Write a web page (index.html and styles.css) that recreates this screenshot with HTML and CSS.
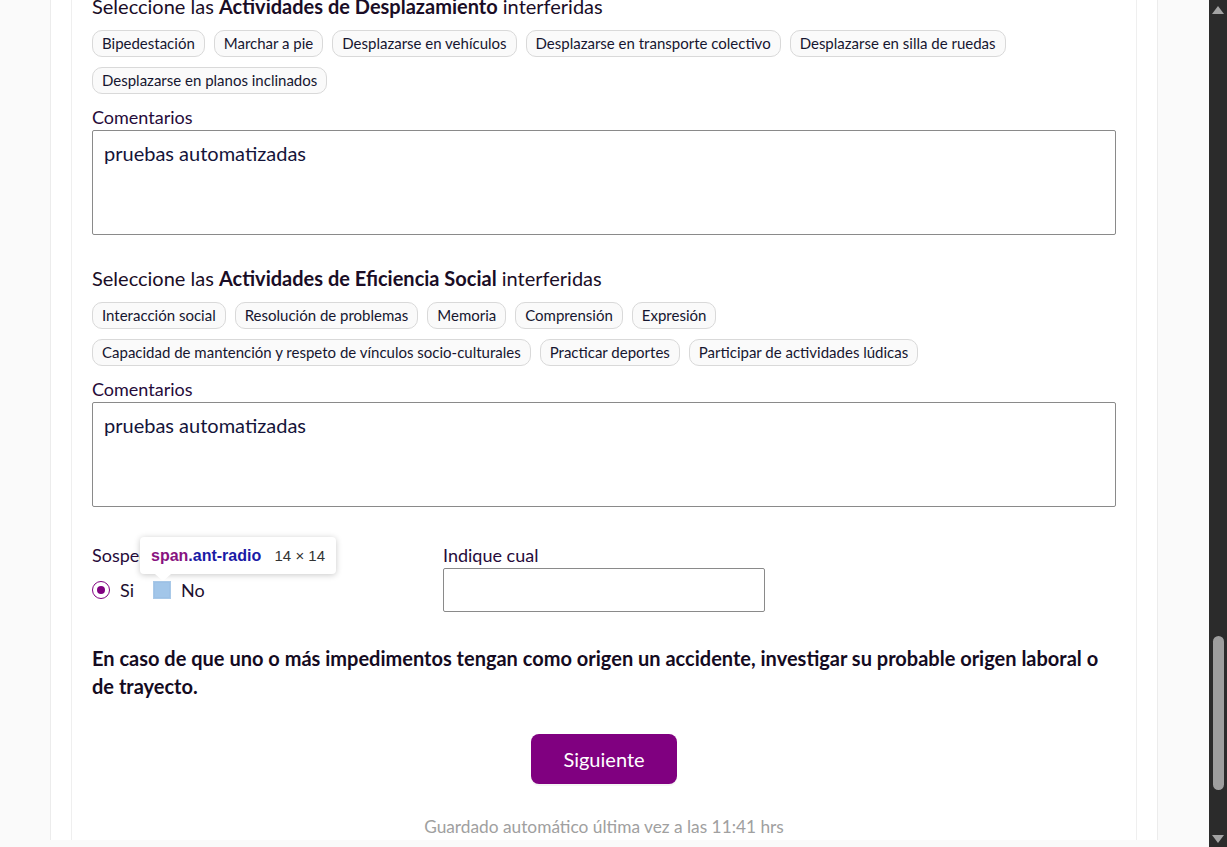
FILE: index.html
```html
<!DOCTYPE html>
<html lang="es">
<head>
<meta charset="utf-8">
<title>Formulario</title>
<link rel="stylesheet" href="styles.css">
</head>
<body>
<div class="screen">
  <main class="viewport">
    <div class="frame">
      <div class="card">
        <section class="section first">
          <h3 class="heading">Seleccione las <b>Actividades de Desplazamiento</b> interferidas</h3>
          <div class="chips">
            <span class="chip">Bipedestación</span>
            <span class="chip">Marchar a pie</span>
            <span class="chip">Desplazarse en vehículos</span>
            <span class="chip">Desplazarse en transporte colectivo</span>
            <span class="chip">Desplazarse en silla de ruedas</span>
            <span class="chip">Desplazarse en planos inclinados</span>
          </div>
          <label class="label">Comentarios</label>
          <div class="textarea">pruebas automatizadas</div>
        </section>

        <section class="section">
          <h3 class="heading">Seleccione las <b>Actividades de Eficiencia Social</b> interferidas</h3>
          <div class="chips">
            <span class="chip">Interacción social</span>
            <span class="chip">Resolución de problemas</span>
            <span class="chip">Memoria</span>
            <span class="chip">Comprensión</span>
            <span class="chip">Expresión</span>
            <span class="chip">Capacidad de mantención y respeto de vínculos socio-culturales</span>
            <span class="chip">Practicar deportes</span>
            <span class="chip">Participar de actividades lúdicas</span>
          </div>
          <label class="label">Comentarios</label>
          <div class="textarea">pruebas automatizadas</div>
        </section>

        <div class="pair">
          <div class="field">
            <label class="label">Sospecha de otra causa</label>
            <div class="radios">
              <span class="radio-item"><span class="radio checked"></span><span class="radio-text">Si</span></span>
              <span class="radio-item"><span class="radio hl"></span><span class="radio-text">No</span></span>
              <div class="tip">
                <span class="tip-sel"><span class="tip-tag">span</span>.ant-radio</span>
                <span class="tip-size">14 × 14</span>
              </div>
            </div>
          </div>
          <div class="field">
            <label class="label">Indique cual</label>
            <div class="input"></div>
          </div>
        </div>

        <p class="notice">En caso de que uno o más impedimentos tengan como origen un accidente, investigar su probable origen laboral o de trayecto.</p>

        <div class="actions">
          <button class="btn">Siguiente</button>
        </div>
        <p class="saved">Guardado automático última vez a las 11:41 hrs</p>
      </div>
    </div>
  </main>
  <aside class="scrollbar">
    <span class="arrow up"></span>
    <div class="track"><div class="thumb"></div></div>
    <span class="arrow down"></span>
  </aside>
</div>
</body>
</html>
```

FILE: styles.css
```css
* { box-sizing: border-box; }
html, body { margin: 0; padding: 0; height: 100%; overflow: hidden; }
body {
  font-family: "Lato", "Open Sans", "Liberation Sans", sans-serif;
  color: #1d0f2e;
  background: #fafafa;
}
.screen {
  display: flex;
  height: 847px;
}
.viewport {
  flex: 1;
  background: #fafafa;
  overflow: hidden;
}
.frame {
  width: 1108px;
  margin: 0 auto 0 50px;
  height: 100%;
  background: #fff;
  border-left: 1px solid #ececec;
  border-right: 1px solid #ececec;
  padding: 0 20px;
}
.card {
  height: 100%;
  border-left: 1px solid #efefef;
  border-right: 1px solid #efefef;
  padding: 0 20px;
}
.section.first { margin-top: -7px; }
.section { margin-bottom: 30px; }
.heading {
  margin: 0 0 10px;
  font-size: 20px;
  font-weight: 400;
  line-height: 27px;
  color: #1a0d26;
}
.heading b { font-weight: 700; }
.chips {
  display: flex;
  flex-wrap: wrap;
  gap: 10px 9px;
}
.chip {
  display: inline-block;
  height: 27px;
  line-height: 25px;
  padding: 0 9px;
  font-size: 15px;
  color: #161630;
  background: #fafafa;
  border: 1px solid #d9d9d9;
  border-radius: 10px;
  white-space: nowrap;
}
.label {
  display: block;
  margin-top: 11px;
  font-size: 18px;
  line-height: 24px;
  margin-bottom: 1px;
  color: #260b3a;
}
.textarea {
  height: 105px;
  border: 1px solid #8a8a8a;
  border-radius: 2px;
  padding: 8px 11px;
  font-size: 20px;
  line-height: 28px;
  color: #14143a;
}
.pair {
  display: grid;
  grid-template-columns: 351px 322px;
  margin-top: 36px;
}
.field .label { margin-top: 0; }
.radios {
  position: relative;
  display: flex;
  align-items: center;
  height: 24px;
  margin-top: 11px;
}
.radio-item {
  display: inline-flex;
  align-items: center;
  margin-right: 19px;
}
.radio {
  display: inline-block;
  width: 18px;
  height: 18px;
  border-radius: 50%;
  border: 1.5px solid #800080;
  position: relative;
}
.radio.checked::after {
  content: "";
  position: absolute;
  left: 3.5px;
  top: 3.5px;
  width: 8px;
  height: 8px;
  border-radius: 50%;
  background: #800080;
}
.radio.hl {
  border: 1px solid #a9c9e8;
  background: #a2c6e9;
  border-radius: 0;
  box-shadow: inset 0 0 0 1px #9dc1e6;
}
.radio-text {
  margin-left: 10px;
  font-size: 18px;
  color: #1d0f2e;
}
.tip {
  position: absolute;
  left: 48px;
  top: -41px;
  width: 196px;
  height: 37px;
  background: #fff;
  border-radius: 4px;
  box-shadow: 0 1px 6px rgba(0,0,0,0.22);
  display: flex;
  align-items: center;
  padding: 0 11px;
  font-family: "Liberation Sans", "Roboto", sans-serif;
  font-size: 16px;
}
.tip::after {
  content: "";
  position: absolute;
  left: 15px;
  bottom: -7px;
  width: 0;
  height: 0;
  border-left: 8px solid transparent;
  border-right: 8px solid transparent;
  border-top: 7px solid #fff;
}
.tip-sel { font-weight: 700; color: #1a1aa6; }
.tip-tag { color: #881280; }
.tip-size { margin-left: auto; color: #333; font-size: 15px; }
.input {
  height: 44px;
  border: 1px solid #8a8a8a;
  border-radius: 2px;
}
.notice {
  margin: 32px 0 0;
  font-size: 20px;
  font-weight: 700;
  line-height: 28px;
  color: #150b1f;
}
.actions {
  display: flex;
  justify-content: center;
  margin-top: 34px;
}
.btn {
  width: 146px;
  height: 50px;
  border: none;
  border-radius: 8px;
  background: #800080;
  color: #fff;
  font-family: inherit;
  font-size: 20px;
  box-shadow: 0 2px 0 rgba(0,0,0,0.04);
}
.saved {
  margin: 31px 0 0;
  text-align: center;
  font-size: 17.3px;
  line-height: 24px;
  color: #a0a0a0;
}
.scrollbar {
  width: 18px;
  background: #2b2b2b;
  display: flex;
  flex-direction: column;
  align-items: center;
}
.arrow {
  width: 0;
  height: 0;
  border-left: 6px solid transparent;
  border-right: 6px solid transparent;
}
.arrow.up { margin-top: 6px; border-bottom: 8px solid #a3a3a3; }
.arrow.down { margin-bottom: 4px; border-top: 8px solid #a3a3a3; }
.track { flex: 1; width: 100%; display: flex; justify-content: center; }
.thumb {
  width: 11px;
  height: 154px;
  margin-top: 622px;
  border-radius: 6px;
  background: #9e9e9e;
}
```
